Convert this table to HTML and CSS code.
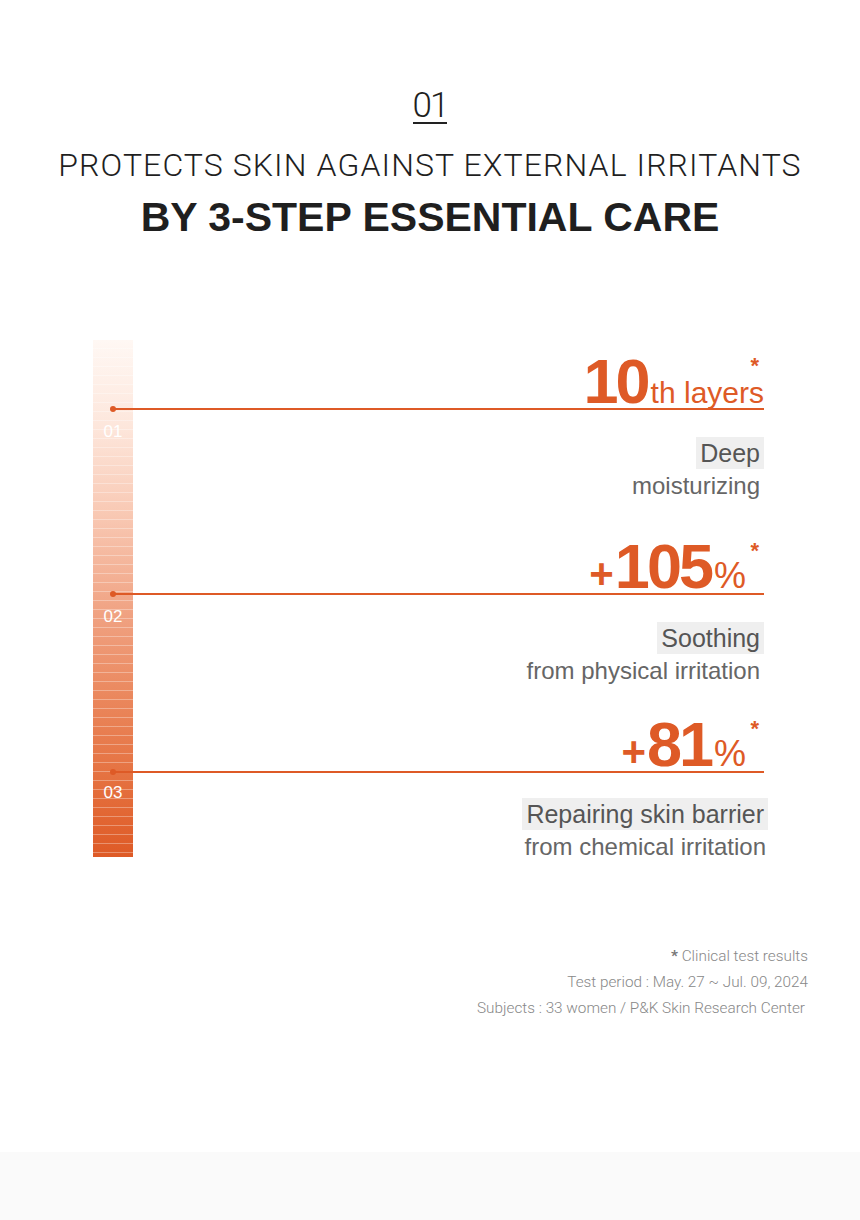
FILE: index.html
```html
<!DOCTYPE html>
<html lang="en">
<head>
<meta charset="utf-8">
<title>3-Step Essential Care</title>
<link rel="stylesheet" href="styles.css">
</head>
<body>
<main class="page">
  <header class="intro">
    <div class="step-tag">01</div>
    <h1 class="title">
      <span class="title-light">PROTECTS SKIN AGAINST EXTERNAL IRRITANTS</span>
      <span class="title-bold">BY 3-STEP ESSENTIAL CARE</span>
    </h1>
  </header>

  <section class="chart">
    <div class="row row-1">
      <div class="stat">
        <span class="big">10</span><span class="unit">th layers</span>
        <span class="mark">*</span>
      </div>
      <div class="detail">
        <span class="step">01</span>
        <div class="labels">
          <span class="label-key">Deep</span>
          <span class="label-sub">moisturizing</span>
        </div>
      </div>
    </div>

    <div class="row row-2">
      <div class="stat stat-pct">
        <span class="plus">+</span><span class="big">105</span><span class="pct">%</span>
        <span class="mark">*</span>
      </div>
      <div class="detail">
        <span class="step">02</span>
        <div class="labels">
          <span class="label-key">Soothing</span>
          <span class="label-sub">from physical irritation</span>
        </div>
      </div>
    </div>

    <div class="row row-3">
      <div class="stat stat-pct">
        <span class="plus">+</span><span class="big">81</span><span class="pct">%</span>
        <span class="mark">*</span>
      </div>
      <div class="detail">
        <span class="step">03</span>
        <div class="labels">
          <span class="label-key">Repairing skin barrier</span>
          <span class="label-sub">from chemical irritation</span>
        </div>
      </div>
    </div>
  </section>

  <div class="notes">
    <p><span class="star">*</span> Clinical test results</p>
    <p>Test period : May. 27 ~ Jul. 09, 2024</p>
    <p class="last">Subjects : 33 women / P&amp;K Skin Research Center</p>
  </div>
</main>
<div class="band"></div>
</body>
</html>
```

FILE: styles.css
```css
html, body {
  margin: 0;
  padding: 0;
  background: #ffffff;
}

body {
  font-family: "Liberation Sans", Arial, sans-serif;
  color: #1f1f1f;
}

.page {
  height: 1152px;
  box-sizing: border-box;
  padding-top: 89px;
}

/* ---------- header ---------- */
.intro {
  text-align: center;
}

.step-tag {
  width: fit-content;
  margin: 0 auto;
  font-family: Roboto, "Liberation Sans", sans-serif;
  font-weight: 300;
  font-size: 35px;
  line-height: 33px;
  letter-spacing: -2px;
  border-bottom: 2px solid #222;
}

.title {
  margin: 21px 0 0;
  font-weight: normal;
}

.title-light {
  display: block;
  font-family: Roboto, "Liberation Sans", sans-serif;
  font-weight: 300;
  font-size: 32px;
  line-height: 40px;
  letter-spacing: 1.1px;
}

.title-bold {
  display: block;
  margin-top: 8px;
  font-weight: 700;
  font-size: 41px;
  line-height: 48px;
  letter-spacing: 0;
}

/* ---------- chart ---------- */
.chart {
  display: flex;
  flex-direction: column;
  box-sizing: border-box;
  margin: 99px 0 0 93px;
  width: 671px;
  height: 517px;
  padding-left: 20px;
  background-image:
    repeating-linear-gradient(to bottom, rgba(255,255,255,0) 0 8px, rgba(255,255,255,0.32) 8px 9px),
    linear-gradient(to bottom, #fff8f4 0%, #fde6db 17%, #f8c6b0 35%, #f0a282 53%, #ea865b 70%, #e46e3c 87%, #de5a26 100%);
  background-size: 40px 100%, 40px 100%;
  background-repeat: no-repeat;
}

.row-1 { margin-top: 14px; }
.row-2 { margin-top: 36px; }
.row-3 { margin-top: 29px; }

.stat {
  position: relative;
  display: flex;
  justify-content: flex-end;
  align-items: baseline;
  height: 54px;
  border-bottom: 2px solid #de5a26;
  color: #de5a26;
}

.stat::before {
  content: "";
  position: absolute;
  left: -3px;
  top: 52px;
  width: 6px;
  height: 6px;
  border-radius: 50%;
  background: #de5a26;
}

.stat-pct {
  padding-right: 18px;
}

.big {
  font-weight: 700;
  font-size: 63px;
  line-height: 54px;
  letter-spacing: -3px;
}

.unit {
  font-weight: 400;
  font-size: 30px;
  line-height: 30px;
  margin-left: 3px;
}

.plus {
  font-weight: 700;
  font-size: 42px;
  line-height: 42px;
  margin-right: 1px;
}

.pct {
  font-weight: 400;
  font-size: 36px;
  line-height: 36px;
  margin-left: 3px;
}

.mark {
  position: absolute;
  right: 5px;
  top: 6px;
  font-size: 22px;
  line-height: 12px;
  font-weight: 700;
}

.detail {
  display: flex;
  justify-content: space-between;
  align-items: flex-start;
}

.step {
  width: 24px;
  margin: 14px 0 0 -12px;
  text-align: center;
  font-size: 17px;
  line-height: 16px;
  font-weight: 400;
  color: #ffffff;
}

.row-3 .step { margin-top: 12px; }

.labels {
  display: flex;
  flex-direction: column;
  align-items: flex-end;
  margin-top: 27px;
}

.row-3 .labels {
  margin-top: 25px;
  margin-right: -4px;
}

.label-key {
  background: #efefef;
  color: #555555;
  font-size: 25px;
  line-height: 32px;
  padding: 0 4px;
}

.label-sub {
  color: #666666;
  font-size: 24px;
  line-height: 34px;
  padding-right: 4px;
}

.row-3 .label-sub {
  padding-right: 2px;
}

/* ---------- notes ---------- */
.notes {
  margin: 86px 52px 0 0;
  text-align: right;
  font-family: Roboto, "Liberation Sans", sans-serif;
  font-size: 15.3px;
  line-height: 26px;
  font-weight: 300;
  color: #888888;
}

.notes p {
  margin: 0;
}

.notes .last {
  padding-right: 3px;
}

.star {
  color: #777;
  font-weight: 700;
}

.band {
  height: 68px;
  background: #fafafa;
}
```
